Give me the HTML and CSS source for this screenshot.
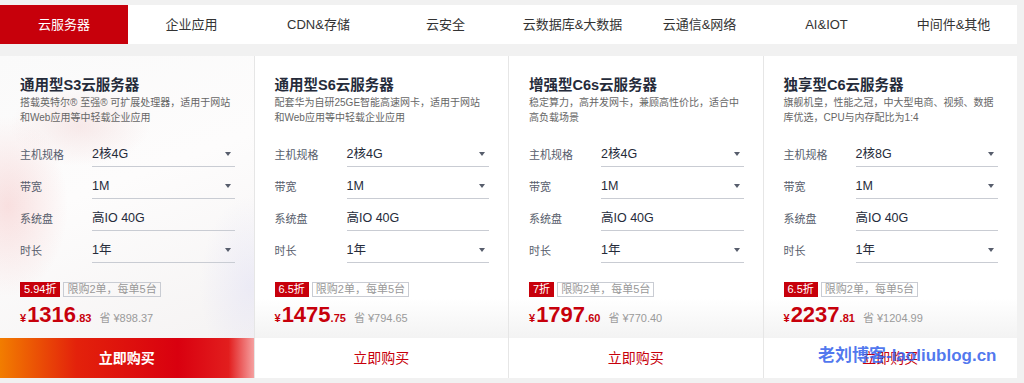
FILE: index.html
```html
<!DOCTYPE html>
<html lang="zh-CN">
<head>
    <meta charset="UTF-8">
    <title>云服务器</title>
    <link rel="stylesheet" href="styles.css">
</head>
<body>
    <div class="wrap">
        <ul class="tabs">
            <li class="active">云服务器</li>
            <li>企业应用</li>
            <li>CDN&amp;存储</li>
            <li>云安全</li>
            <li>云数据库&amp;大数据</li>
            <li>云通信&amp;网络</li>
            <li>AI&amp;IOT</li>
            <li>中间件&amp;其他</li>
        </ul>

        <div class="cards">
            <div class="card first">
                <div class="body">
                    <h3>通用型S3云服务器</h3>
                    <p class="desc">搭载英特尔® 至强® 可扩展处理器，适用于网站<br>和Web应用等中轻载企业应用</p>
                    <div class="row"><span class="label">主机规格</span><span class="sel">2核4G<i></i></span></div>
                    <div class="row"><span class="label">带宽</span><span class="sel">1M<i></i></span></div>
                    <div class="row"><span class="label">系统盘</span><span class="sel">高IO 40G</span></div>
                    <div class="row"><span class="label">时长</span><span class="sel">1年<i></i></span></div>
                    <div class="tags"><span class="off">5.94折</span><span class="limit">限购2单，每单5台</span></div>
                    <div class="price"><span class="yen">¥</span><span class="num">1316</span><span class="dec">.83</span><span class="save">省 ¥898.37</span></div>
                </div>
                <div class="buy">立即购买</div>
            </div>

            <div class="card">
                <div class="body">
                    <h3>通用型S6云服务器</h3>
                    <p class="desc">配套华为自研25GE智能高速网卡，适用于网站<br>和Web应用等中轻载企业应用</p>
                    <div class="row"><span class="label">主机规格</span><span class="sel">2核4G<i></i></span></div>
                    <div class="row"><span class="label">带宽</span><span class="sel">1M<i></i></span></div>
                    <div class="row"><span class="label">系统盘</span><span class="sel">高IO 40G</span></div>
                    <div class="row"><span class="label">时长</span><span class="sel">1年<i></i></span></div>
                    <div class="tags"><span class="off">6.5折</span><span class="limit">限购2单，每单5台</span></div>
                    <div class="price"><span class="yen">¥</span><span class="num">1475</span><span class="dec">.75</span><span class="save">省 ¥794.65</span></div>
                </div>
                <div class="buy">立即购买</div>
            </div>

            <div class="card">
                <div class="body">
                    <h3>增强型C6s云服务器</h3>
                    <p class="desc">稳定算力，高并发网卡，兼顾高性价比，适合中<br>高负载场景</p>
                    <div class="row"><span class="label">主机规格</span><span class="sel">2核4G<i></i></span></div>
                    <div class="row"><span class="label">带宽</span><span class="sel">1M<i></i></span></div>
                    <div class="row"><span class="label">系统盘</span><span class="sel">高IO 40G</span></div>
                    <div class="row"><span class="label">时长</span><span class="sel">1年<i></i></span></div>
                    <div class="tags"><span class="off">7折</span><span class="limit">限购2单，每单5台</span></div>
                    <div class="price"><span class="yen">¥</span><span class="num">1797</span><span class="dec">.60</span><span class="save">省 ¥770.40</span></div>
                </div>
                <div class="buy">立即购买</div>
            </div>

            <div class="card">
                <div class="body">
                    <h3>独享型C6云服务器</h3>
                    <p class="desc">旗舰机皇，性能之冠，中大型电商、视频、数据<br>库优选，CPU与内存配比为1:4</p>
                    <div class="row"><span class="label">主机规格</span><span class="sel">2核8G<i></i></span></div>
                    <div class="row"><span class="label">带宽</span><span class="sel">1M<i></i></span></div>
                    <div class="row"><span class="label">系统盘</span><span class="sel">高IO 40G</span></div>
                    <div class="row"><span class="label">时长</span><span class="sel">1年<i></i></span></div>
                    <div class="tags"><span class="off">6.5折</span><span class="limit">限购2单，每单5台</span></div>
                    <div class="price"><span class="yen">¥</span><span class="num">2237</span><span class="dec">.81</span><span class="save">省 ¥1204.99</span></div>
                </div>
                <div class="buy">立即购买</div>
            </div>
        </div>

        <div class="mark">老刘博客-laoliublog.cn</div>
    </div>
</body>
</html>
```

FILE: styles.css
```css
*{
    margin: 0;
    padding: 0;
    list-style: none;
    box-sizing: border-box;
}
body{
    background: #f1f1f1;
    font-family: "Liberation Sans", "Noto Sans CJK SC", sans-serif;
    color: #333;
}
.wrap{
    position: relative;
    width: 1017px;
    padding-top: 5px;
}
.tabs{
    display: grid;
    grid-template-columns: 128px repeat(7, minmax(0, 1fr));
    height: 39px;
    background: #fff;
}
.tabs>li{
    text-align: center;
    line-height: 39px;
    font-size: 13px;
    color: #333;
}
.tabs>li.active{
    background: #c7000b;
    color: #fff;
}
.cards{
    display: grid;
    grid-template-columns: repeat(4, minmax(0, 1fr));
    gap: 1px;
    margin-top: 12px;
    background: #e6e6e6;
}
.card{
    display: flex;
    flex-direction: column;
    min-width: 0;
    background: #fff;
}
.card .body{
    height: 282px;
    padding: 19px 19px 0 20px;
    background: linear-gradient(#fff 0, #fff 86%, #f3f3f3 100%);
}
.card.first .body{
    background:
        radial-gradient(ellipse 60px 90px at 8px 150px, rgba(240, 170, 170, 0.35), transparent),
        radial-gradient(ellipse 70px 40px at 80px 70px, rgba(235, 190, 190, 0.3), transparent),
        radial-gradient(ellipse 50px 90px at 250px 230px, rgba(215, 215, 245, 0.35), transparent),
        linear-gradient(160deg, #fafafa 0, #fdfcfc 45%, #f5f3f3 100%);
}
.card h3{
    font-size: 14.5px;
    line-height: 20px;
    font-weight: bold;
    color: #252b3a;
}
.desc{
    font-size: 10px;
    line-height: 15px;
    color: #666;
    white-space: nowrap;
}
.row{
    display: flex;
    align-items: center;
    height: 26px;
    margin-top: 6px;
}
.desc + .row{
    margin-top: 16px;
}
.label{
    width: 72px;
    flex: none;
    font-size: 11px;
    color: #575d6c;
}
.sel{
    position: relative;
    flex: 1;
    height: 26px;
    line-height: 26px;
    font-size: 12.5px;
    color: #252b3a;
    border-bottom: 1px solid #c9ccd3;
}
.sel i{
    position: absolute;
    right: 4px;
    top: 11px;
    border-left: 3px solid transparent;
    border-right: 3px solid transparent;
    border-top: 4px solid #575d6c;
}
.tags{
    display: flex;
    gap: 3px;
    margin-top: 19px;
    height: 15px;
}
.off{
    padding: 0 4px;
    background: #c7000b;
    color: #fff;
    font-size: 11px;
    line-height: 15px;
}
.limit{
    padding: 0 3px;
    border: 1px solid #c9ccd3;
    color: #999;
    font-size: 11px;
    line-height: 13px;
}
.price{
    display: flex;
    align-items: baseline;
    margin-top: 5px;
    color: #c7000b;
    font-weight: bold;
}
.yen{
    font-size: 11px;
    margin-right: 1px;
}
.num{
    font-size: 22px;
}
.dec{
    font-size: 11px;
}
.save{
    margin-left: 8px;
    font-size: 11px;
    font-weight: normal;
    color: #9a9a9a;
}
.buy{
    height: 40px;
    line-height: 40px;
    text-align: center;
    font-size: 14px;
    color: #c7000b;
    background: #fff;
}
.card.first .buy{
    color: #fff;
    font-weight: bold;
    background: linear-gradient(90deg, #f27d00 0, #e3220b 30%, #d9000f 70%, #e21e1e 90%, #f5a0a0 100%);
}
.mark{
    position: absolute;
    left: 818px;
    top: 341px;
    font-size: 17px;
    font-weight: bold;
    color: rgba(50, 95, 235, 0.85);
    white-space: nowrap;
}
```
